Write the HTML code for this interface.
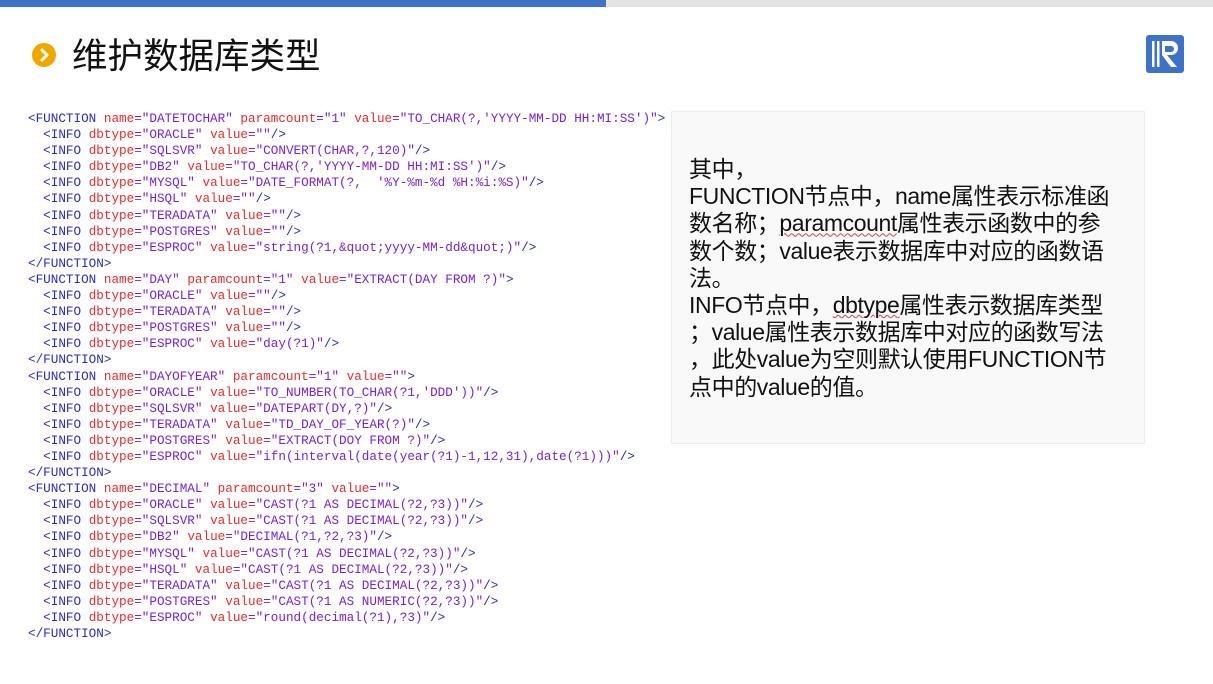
<!DOCTYPE html>
<html><head><meta charset="utf-8"><style>
body{margin:0;width:1213px;height:684px;background:#fff;position:relative;overflow:hidden;font-family:"Liberation Sans","Noto Sans CJK SC",sans-serif}
.bar1{position:absolute;left:0;top:0;width:606px;height:7px;background:#3e72c8}
.bar2{position:absolute;left:606px;top:0;width:607px;height:7px;background:#e4e4e4}
.dot{position:absolute;left:32px;top:43px;width:24px;height:24px;border-radius:50%;background:#f0a800}
h1{position:absolute;left:72px;top:32px;margin:0;font-weight:normal;font-size:35.5px;line-height:48px;color:#111;font-family:"Liberation Sans","Noto Sans CJK SC",sans-serif}
.code{position:absolute;left:28px;top:111px;font-family:"Liberation Mono",monospace;font-size:12.65px;color:#2a2ac8}
.code div{height:16.1px;line-height:16.1px;white-space:pre}
.a{color:#ee2a2a}.v{color:#7a1ee0}
.panel{position:absolute;left:671px;top:111px;width:472px;height:331px;background:#f9f9f9;border:1px solid #ececec}
.txt{position:absolute;left:689px;top:156px;font-size:23px;line-height:27.2px;color:#111;white-space:nowrap;letter-spacing:-0.4px}
.sq{text-decoration:underline wavy #e04040;text-decoration-thickness:1px}
</style></head><body>
<div class="bar1"></div><div class="bar2"></div>
<div class="dot"><svg width="24" height="24" viewBox="0 0 24 24"><path d="M10 7l5 5-5 5" stroke="#fff" stroke-width="3" fill="none" stroke-linecap="round" stroke-linejoin="round"/></svg></div>
<h1>维护数据库类型</h1>
<svg style="position:absolute;left:1146px;top:35px" width="38" height="38" viewBox="0 0 38 38"><rect x="0" y="0" width="38" height="38" rx="3" fill="#3e72c8"/><rect x="6" y="6" width="2.5" height="26" fill="#fff"/><rect x="11" y="6" width="2.5" height="26" fill="#fff"/><path d="M16 6h9a7 7 0 0 1 0 14h-4l10 12h-6l-9-12z" fill="#fff"/><path d="M19 11h6a3 3 0 0 1 0 6h-6z" fill="#3e72c8"/></svg>
<div class="code"><div>&lt;FUNCTION <span class="a">name</span><span class="v">="DATETOCHAR"</span> <span class="a">paramcount</span><span class="v">="1"</span> <span class="a">value</span><span class="v">="TO_CHAR(?,'YYYY-MM-DD HH:MI:SS')"</span>&gt;</div><div>  &lt;INFO <span class="a">dbtype</span><span class="v">="ORACLE"</span> <span class="a">value</span><span class="v">=""</span>/&gt;</div><div>  &lt;INFO <span class="a">dbtype</span><span class="v">="SQLSVR"</span> <span class="a">value</span><span class="v">="CONVERT(CHAR,?,120)"</span>/&gt;</div><div>  &lt;INFO <span class="a">dbtype</span><span class="v">="DB2"</span> <span class="a">value</span><span class="v">="TO_CHAR(?,'YYYY-MM-DD HH:MI:SS')"</span>/&gt;</div><div>  &lt;INFO <span class="a">dbtype</span><span class="v">="MYSQL"</span> <span class="a">value</span><span class="v">="DATE_FORMAT(?,  '%Y-%m-%d %H:%i:%S)"</span>/&gt;</div><div>  &lt;INFO <span class="a">dbtype</span><span class="v">="HSQL"</span> <span class="a">value</span><span class="v">=""</span>/&gt;</div><div>  &lt;INFO <span class="a">dbtype</span><span class="v">="TERADATA"</span> <span class="a">value</span><span class="v">=""</span>/&gt;</div><div>  &lt;INFO <span class="a">dbtype</span><span class="v">="POSTGRES"</span> <span class="a">value</span><span class="v">=""</span>/&gt;</div><div>  &lt;INFO <span class="a">dbtype</span><span class="v">="ESPROC"</span> <span class="a">value</span><span class="v">="string(?1,&amp;quot;yyyy-MM-dd&amp;quot;)"</span>/&gt;</div><div>&lt;/FUNCTION&gt;</div><div>&lt;FUNCTION <span class="a">name</span><span class="v">="DAY"</span> <span class="a">paramcount</span><span class="v">="1"</span> <span class="a">value</span><span class="v">="EXTRACT(DAY FROM ?)"</span>&gt;</div><div>  &lt;INFO <span class="a">dbtype</span><span class="v">="ORACLE"</span> <span class="a">value</span><span class="v">=""</span>/&gt;</div><div>  &lt;INFO <span class="a">dbtype</span><span class="v">="TERADATA"</span> <span class="a">value</span><span class="v">=""</span>/&gt;</div><div>  &lt;INFO <span class="a">dbtype</span><span class="v">="POSTGRES"</span> <span class="a">value</span><span class="v">=""</span>/&gt;</div><div>  &lt;INFO <span class="a">dbtype</span><span class="v">="ESPROC"</span> <span class="a">value</span><span class="v">="day(?1)"</span>/&gt;</div><div>&lt;/FUNCTION&gt;</div><div>&lt;FUNCTION <span class="a">name</span><span class="v">="DAYOFYEAR"</span> <span class="a">paramcount</span><span class="v">="1"</span> <span class="a">value</span><span class="v">=""</span>&gt;</div><div>  &lt;INFO <span class="a">dbtype</span><span class="v">="ORACLE"</span> <span class="a">value</span><span class="v">="TO_NUMBER(TO_CHAR(?1,'DDD'))"</span>/&gt;</div><div>  &lt;INFO <span class="a">dbtype</span><span class="v">="SQLSVR"</span> <span class="a">value</span><span class="v">="DATEPART(DY,?)"</span>/&gt;</div><div>  &lt;INFO <span class="a">dbtype</span><span class="v">="TERADATA"</span> <span class="a">value</span><span class="v">="TD_DAY_OF_YEAR(?)"</span>/&gt;</div><div>  &lt;INFO <span class="a">dbtype</span><span class="v">="POSTGRES"</span> <span class="a">value</span><span class="v">="EXTRACT(DOY FROM ?)"</span>/&gt;</div><div>  &lt;INFO <span class="a">dbtype</span><span class="v">="ESPROC"</span> <span class="a">value</span><span class="v">="ifn(interval(date(year(?1)-1,12,31),date(?1)))"</span>/&gt;</div><div>&lt;/FUNCTION&gt;</div><div>&lt;FUNCTION <span class="a">name</span><span class="v">="DECIMAL"</span> <span class="a">paramcount</span><span class="v">="3"</span> <span class="a">value</span><span class="v">=""</span>&gt;</div><div>  &lt;INFO <span class="a">dbtype</span><span class="v">="ORACLE"</span> <span class="a">value</span><span class="v">="CAST(?1 AS DECIMAL(?2,?3))"</span>/&gt;</div><div>  &lt;INFO <span class="a">dbtype</span><span class="v">="SQLSVR"</span> <span class="a">value</span><span class="v">="CAST(?1 AS DECIMAL(?2,?3))"</span>/&gt;</div><div>  &lt;INFO <span class="a">dbtype</span><span class="v">="DB2"</span> <span class="a">value</span><span class="v">="DECIMAL(?1,?2,?3)"</span>/&gt;</div><div>  &lt;INFO <span class="a">dbtype</span><span class="v">="MYSQL"</span> <span class="a">value</span><span class="v">="CAST(?1 AS DECIMAL(?2,?3))"</span>/&gt;</div><div>  &lt;INFO <span class="a">dbtype</span><span class="v">="HSQL"</span> <span class="a">value</span><span class="v">="CAST(?1 AS DECIMAL(?2,?3))"</span>/&gt;</div><div>  &lt;INFO <span class="a">dbtype</span><span class="v">="TERADATA"</span> <span class="a">value</span><span class="v">="CAST(?1 AS DECIMAL(?2,?3))"</span>/&gt;</div><div>  &lt;INFO <span class="a">dbtype</span><span class="v">="POSTGRES"</span> <span class="a">value</span><span class="v">="CAST(?1 AS NUMERIC(?2,?3))"</span>/&gt;</div><div>  &lt;INFO <span class="a">dbtype</span><span class="v">="ESPROC"</span> <span class="a">value</span><span class="v">="round(decimal(?1),?3)"</span>/&gt;</div><div>&lt;/FUNCTION&gt;</div></div>
<div class="panel"></div>
<div class="txt">其中，<br>FUNCTION节点中，name属性表示标准函<br>数名称；<span class="sq">paramcount</span>属性表示函数中的参<br>数个数；value表示数据库中对应的函数语<br>法。<br>INFO节点中，<span class="sq">dbtype</span>属性表示数据库类型<br>；value属性表示数据库中对应的函数写法<br>，此处value为空则默认使用FUNCTION节<br>点中的value的值。</div>
</body></html>
